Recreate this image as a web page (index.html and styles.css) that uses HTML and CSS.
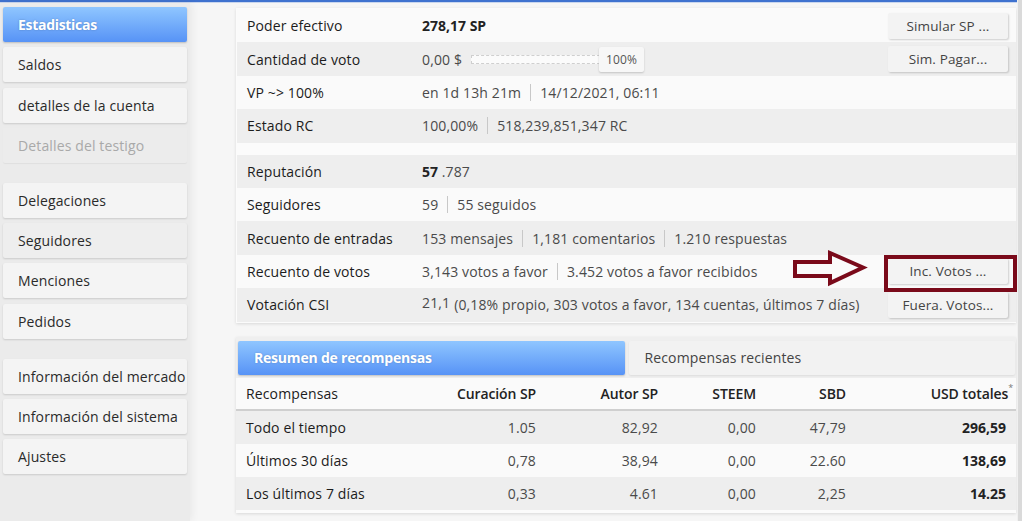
FILE: index.html
```html
<!DOCTYPE html>
<html lang="es">
<head>
<meta charset="utf-8">
<title>Estadisticas</title>
<link rel="stylesheet" href="styles.css">
</head>
<body>
<div class="page">
  <div class="frame">
    <div class="topbar"></div>
    <div class="layout">
      <nav class="sidebar">
        <div class="group">
          <div class="nav-item active">Estadisticas</div>
          <div class="nav-item">Saldos</div>
          <div class="nav-item">detalles de la cuenta</div>
          <div class="nav-item disabled">Detalles del testigo</div>
        </div>
        <div class="group">
          <div class="nav-item">Delegaciones</div>
          <div class="nav-item hover">Seguidores</div>
          <div class="nav-item">Menciones</div>
          <div class="nav-item">Pedidos</div>
        </div>
        <div class="group">
          <div class="nav-item">Información del mercado</div>
          <div class="nav-item">Información del sistema</div>
          <div class="nav-item">Ajustes</div>
        </div>
      </nav>
      <main class="main">
        <section class="panel stats">
          <div class="row light">
            <div class="label">Poder efectivo</div>
            <div class="value"><b class="strong">278,17 SP</b></div>
            <div class="action"><span class="btn">Simular SP ...</span></div>
          </div>
          <div class="row dark">
            <div class="label">Cantidad de voto</div>
            <div class="value">0,00 $<span class="slider"><span class="track"></span><span class="handle">100%</span></span></div>
            <div class="action"><span class="btn">Sim. Pagar...</span></div>
          </div>
          <div class="row light">
            <div class="label">VP ~&gt; 100%</div>
            <div class="value">en 1d 13h 21m<span class="sep"></span>14/12/2021, 06:11</div>
          </div>
          <div class="row dark">
            <div class="label">Estado RC</div>
            <div class="value">100,00%<span class="sep"></span>518,239,851,347 RC</div>
          </div>
          <div class="spacer"></div>
          <div class="row dark">
            <div class="label">Reputación</div>
            <div class="value"><b class="strong">57</b>&nbsp;.787</div>
          </div>
          <div class="row light">
            <div class="label">Seguidores</div>
            <div class="value">59<span class="sep"></span>55 seguidos</div>
          </div>
          <div class="row dark">
            <div class="label">Recuento de entradas</div>
            <div class="value">153 mensajes<span class="sep"></span>1,181 comentarios<span class="sep"></span>1.210 respuestas</div>
          </div>
          <div class="row light">
            <div class="label">Recuento de votos</div>
            <div class="value">3,143 votos a favor<span class="sep"></span>3.452 votos a favor recibidos</div>
            <div class="action"><span class="btn">Inc. Votos ...</span></div>
          </div>
          <div class="row dark">
            <div class="label">Votación CSI</div>
            <div class="value"><span class="raised">21,1</span> (0,18% propio, 303 votos a favor, 134 cuentas, últimos 7 días)</div>
            <div class="action"><span class="btn">Fuera. Votos...</span></div>
          </div>
        </section>

        <section class="panel rewards">
          <div class="tabs">
            <div class="tab active">Resumen de recompensas</div>
            <div class="tab">Recompensas recientes</div>
          </div>
          <div class="table">
            <div class="trow head">
              <div class="c first plain">Recompensas</div>
              <div class="c">Curación SP</div>
              <div class="c">Autor SP</div>
              <div class="c">STEEM</div>
              <div class="c">SBD</div>
              <div class="c">USD totales<sup class="star">*</sup></div>
            </div>
            <div class="trow dark">
              <div class="c first">Todo el tiempo</div>
              <div class="c">1.05</div>
              <div class="c">82,92</div>
              <div class="c">0,00</div>
              <div class="c">47,79</div>
              <div class="c total">296,59</div>
            </div>
            <div class="trow light">
              <div class="c first">Últimos 30 días</div>
              <div class="c">0,78</div>
              <div class="c">38,94</div>
              <div class="c">0,00</div>
              <div class="c">22.60</div>
              <div class="c total">138,69</div>
            </div>
            <div class="trow dark">
              <div class="c first">Los últimos 7 días</div>
              <div class="c">0,33</div>
              <div class="c">4.61</div>
              <div class="c">0,00</div>
              <div class="c">2,25</div>
              <div class="c total">14.25</div>
            </div>
          </div>
        </section>
      </main>
    </div>
  </div>
  <div class="scroll-edge"></div>
</div>

<svg class="arrow" width="80" height="44" viewBox="790 247 80 44" aria-hidden="true">
  <polygon points="795,262 830,262 830,253 863,267.5 830,283 830,276 795,276" fill="none" stroke="#7a0a1a" stroke-width="4" stroke-linejoin="miter"/>
</svg>
<div class="highlight"></div>
</body>
</html>
```

FILE: styles.css
```css
* { box-sizing: border-box; }

html, body {
  margin: 0;
  padding: 0;
  height: 100%;
}

body {
  font-family: "Open Sans", "DejaVu Sans", sans-serif;
  font-size: 14px;
  letter-spacing: 0.13px;
  color: #333;
  background: #f6f6f6;
  overflow: hidden;
  position: relative;
}

.page {
  display: flex;
  height: 521px;
}

.frame {
  flex: 1;
  display: flex;
  flex-direction: column;
  min-width: 0;
}

.topbar {
  height: 3px;
  background: linear-gradient(#3f72cf 0, #3f72cf 2px, #c9d6ee 2px);
  flex: none;
}

.layout {
  flex: 1;
  display: flex;
  min-height: 0;
}

/* Sidebar */
.sidebar {
  width: 190px;
  flex: none;
  background: #ebebeb;
  padding: 4px 3px 0 3px;
  display: flex;
  flex-direction: column;
  gap: 20px;
  box-shadow: 2px 0 8px rgba(0, 0, 0, 0.06);
  position: relative;
  z-index: 1;
}

.group {
  display: flex;
  flex-direction: column;
  gap: 5.3px;
}

.nav-item {
  height: 35px;
  width: 184px;
  display: flex;
  align-items: center;
  padding-left: 15px;
  background: #f4f4f4;
  color: #2a2a2a;
  border-radius: 2px;
  box-shadow: 0 1px 2px rgba(0, 0, 0, 0.14);
  white-space: nowrap;
}

.nav-item.active {
  background: linear-gradient(#8fc6ff, #5793f6);
  color: #fff;
  font-weight: 700;
  letter-spacing: -0.3px;
  text-shadow: 0 0 2px rgba(0, 0, 0, 0.25);
  box-shadow: 0 1px 2px rgba(0, 0, 0, 0.2);
}

.nav-item.hover {
  background: #eeeeee;
}

.nav-item.disabled {
  background: #ececec;
  color: #a9a9a9;
  box-shadow: 0 1px 1px rgba(0, 0, 0, 0.05);
}

/* Main */
.main {
  flex: 1;
  padding: 5px 1px 0 46px;
  display: flex;
  flex-direction: column;
  gap: 14px;
  min-width: 0;
}

.panel {
  background: #fbfbfb;
  box-shadow: 0 1px 3px rgba(0, 0, 0, 0.12);
}

.stats {
  padding: 1px 0 1px 1px;
}

.row {
  height: 33.4px;
  display: grid;
  grid-template-columns: 185px 1fr auto;
  align-items: center;
}

.row.light { background: #fafafa; }
.row.dark { background: #eeeeee; }

.spacer { height: 12px; }

.label {
  padding-left: 10px;
  color: #1c1c1c;
  white-space: nowrap;
}

.value {
  color: #4a4a4a;
  display: flex;
  align-items: center;
  white-space: nowrap;
}

.strong {
  color: #222;
  font-weight: 700;
  letter-spacing: 0;
}

.raised {
  position: relative;
  top: -2px;
  margin-right: 4px;
}

.sep {
  display: inline-block;
  width: 1px;
  height: 17px;
  background: #c8c8c8;
  margin: 0 9px;
}

.slider {
  display: inline-flex;
  align-items: center;
  margin-left: 9px;
}

.track {
  width: 129px;
  height: 9px;
  border: 1px dashed #cfcfcf;
  background: #fbfbfb;
}

.handle {
  width: 45px;
  height: 25px;
  display: inline-flex;
  align-items: center;
  justify-content: center;
  background: #f7f7f7;
  border-radius: 2px;
  box-shadow: 0 1px 2px rgba(0, 0, 0, 0.18);
  font-size: 12px;
  color: #555;
  margin-left: -1px;
}

.action {
  padding-right: 8px;
}

.btn {
  width: 120px;
  height: 26px;
  display: flex;
  align-items: center;
  justify-content: center;
  background: #f3f3f3;
  border-radius: 2px;
  box-shadow: 1px 1px 2px rgba(0, 0, 0, 0.18);
  color: #444;
  font-size: 13.5px;
  white-space: nowrap;
}

/* Rewards */
.rewards {
  padding-bottom: 3px;
}

.tabs {
  background: #efefef;
  display: flex;
  gap: 4px;
  padding: 4px 1px 3px 2px;
}

.tab {
  flex: 1;
  height: 34px;
  display: flex;
  align-items: center;
  padding-left: 16px;
  background: #f2f2f2;
  color: #444;
  border-radius: 2px;
  box-shadow: 0 1px 2px rgba(0, 0, 0, 0.08);
}

.tab.active {
  background: linear-gradient(#8fc6ff, #5793f6);
  color: #fff;
  font-weight: 700;
  letter-spacing: -0.2px;
  text-shadow: 0 0 2px rgba(0, 0, 0, 0.2);
  box-shadow: 0 1px 2px rgba(0, 0, 0, 0.2);
}

.trow {
  display: grid;
  grid-template-columns: 200px 110px 122px 98px 90px 1fr;
  align-items: center;
  height: 33.2px;
}

.trow.head {
  height: 33px;
  border-bottom: 2px solid #cfcfcf;
  background: #fafafa;
}

.trow.dark { background: #eeeeee; }
.trow.light { background: #fafafa; }

.c {
  text-align: right;
  padding-right: 10px;
  color: #4a4a4a;
  white-space: nowrap;
}

.head .c {
  color: #222;
  font-weight: 600;
  letter-spacing: -0.1px;
}

.head .c.plain {
  font-weight: 400;
  letter-spacing: 0.13px;
}

.c.first {
  text-align: left;
  padding-left: 10px;
  padding-right: 0;
  color: #1c1c1c;
}

.c.total {
  color: #222;
  font-weight: 700;
  letter-spacing: 0;
}

.star {
  font-size: 9px;
  font-weight: 400;
  color: #777;
  margin-right: -7px;
  vertical-align: top;
  position: relative;
  top: -3px;
}

.scroll-edge {
  width: 5px;
  flex: none;
  background: #dadada;
  border-left: 1px solid #f0f0f0;
}

/* Annotation overlays */
.arrow {
  position: absolute;
  left: 790px;
  top: 247px;
}

.highlight {
  position: absolute;
  left: 884px;
  top: 255px;
  width: 133px;
  height: 37px;
  border: 4px solid #7a0a1a;
}
```
